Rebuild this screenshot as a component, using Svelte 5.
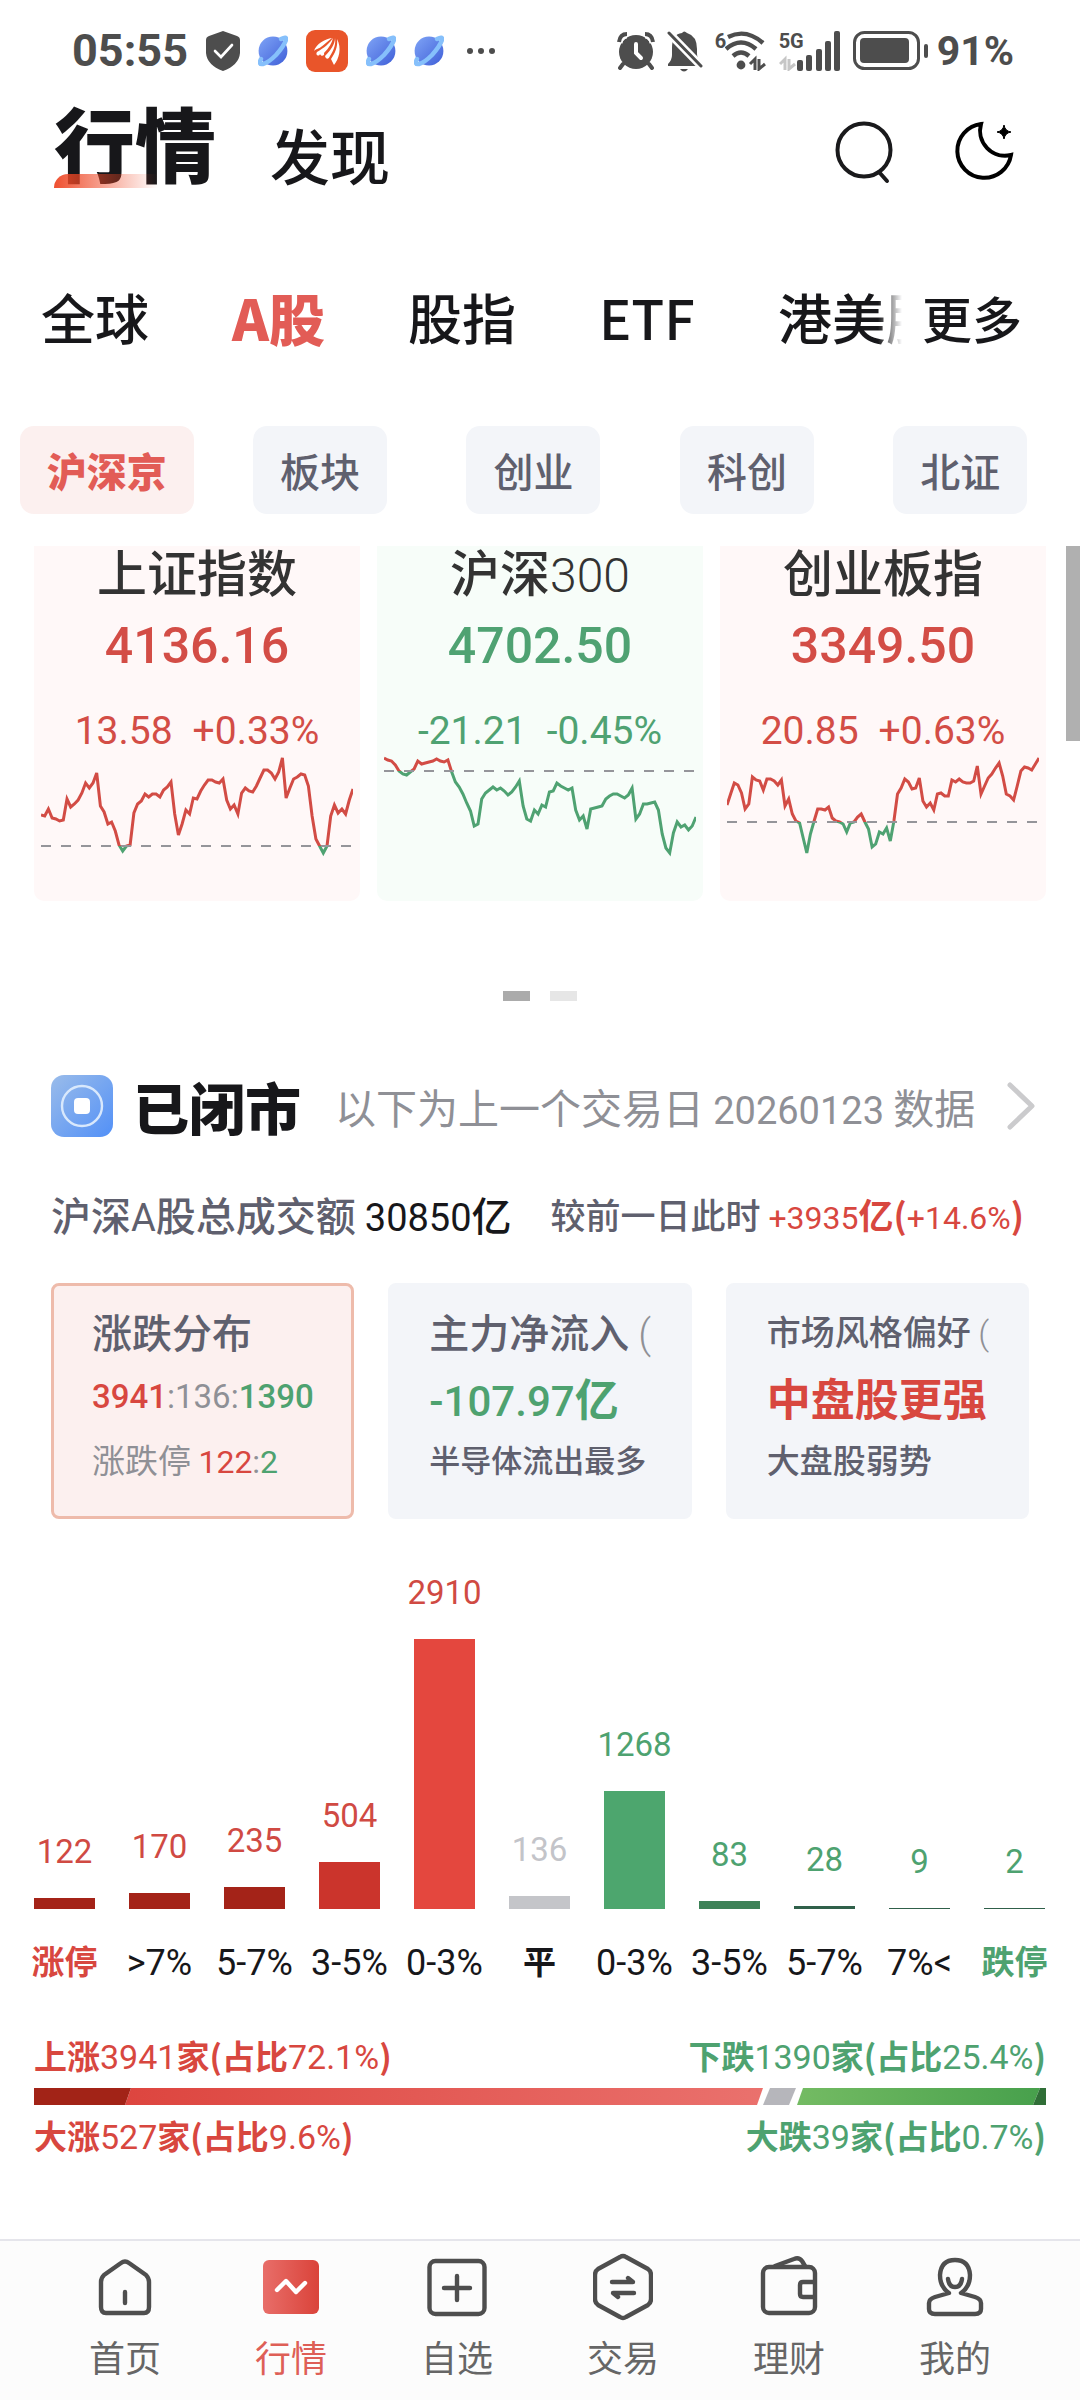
<script>
  const topTabs = ['全球', 'A股', '股指', 'ETF', '港美股'];
  const chips = ['沪深京', '板块', '创业', '科创', '北证'];

  let activeTab = $state('A股');
  let activeChip = $state('沪深京');

  const indexes = [
    {
      id: 'sh', name: '上证指数', code: '', value: '4136.16', diff: '13.58', pct: '+0.33%', up: true, base: 95,
      line: [64,65,58,67,68,70,69,48,56,53,49,42,32,37,32,22,55,61,73,71,80,94,100,95,94,62,53,50,43,46,43,43,46,39,36,31,63,84,73,59,63,47,48,40,34,29,29,31,32,28,49,58,54,63,42,37,40,41,35,27,19,19,22,28,21,7,47,37,28,26,23,24,35,65,88,95,102,95,65,54,62,58,63,49,38]
    },
    {
      id: 'hs', name: '沪深', code: '300', value: '4702.50', diff: '-21.21', pct: '-0.45%', up: false, base: 20,
      line: [7,9,10,14,20,23,24,21,18,10,13,12,11,10,8,10,11,9,21,31,36,43,52,60,75,73,48,42,39,36,39,37,40,44,41,36,30,55,68,70,59,63,54,56,41,40,32,35,37,39,37,59,69,65,78,58,57,56,55,48,45,43,43,45,47,44,37,68,63,53,53,52,51,59,83,97,102,82,71,76,74,79,75,66]
    },
    {
      id: 'cy', name: '创业板指', code: '', value: '3349.50', diff: '20.85', pct: '+0.63%', up: true, base: 71,
      line: [54,43,32,34,42,58,53,26,29,30,39,28,28,30,34,29,55,48,63,70,72,87,102,83,70,58,58,59,56,67,70,71,73,81,72,71,66,63,71,78,96,93,81,83,77,90,70,43,37,28,31,38,37,27,50,56,52,59,43,42,45,45,29,31,28,31,32,32,30,15,43,35,27,23,17,12,25,43,45,49,35,20,16,17,19,13,7]
    }
  ];

  const bars = [
    { count: 122, label: '涨停', tone: 'deep-red' },
    { count: 170, label: '>7%', tone: 'deep-red' },
    { count: 235, label: '5-7%', tone: 'deep-red' },
    { count: 504, label: '3-5%', tone: 'mid-red' },
    { count: 2910, label: '0-3%', tone: 'red' },
    { count: 136, label: '平', tone: 'grey' },
    { count: 1268, label: '0-3%', tone: 'green' },
    { count: 83, label: '3-5%', tone: 'mid-green' },
    { count: 28, label: '5-7%', tone: 'deep-green' },
    { count: 9, label: '7%<', tone: 'deep-green' },
    { count: 2, label: '跌停', tone: 'deep-green' }
  ];

  const navItems = [
    { id: 'home', label: '首页' },
    { id: 'market', label: '行情' },
    { id: 'watch', label: '自选' },
    { id: 'trade', label: '交易' },
    { id: 'wealth', label: '理财' },
    { id: 'mine', label: '我的' }
  ];

  function toPoints(line) {
    const step = 312 / (line.length - 1);
    return line.map((y, i) => `${(i * step).toFixed(1)},${y}`).join(' ');
  }

  function barHeight(count) {
    return Math.max(1, Math.round((count / 2910) * 270));
  }
</script>

{#snippet planet()}
  <svg width="30" height="32" viewBox="0 0 30 32">
    <circle cx="15" cy="16" r="14.4" fill="url(#planetFill)" />
    <path d="M3 24Q0 30 5 29Q10 28 18 20Q26 11 28 5Q29 1 23 4" fill="none" stroke="#86c0fb" stroke-width="4.4" stroke-linecap="round" />
  </svg>
{/snippet}

<div class="page">
  <svg class="defs" width="0" height="0" aria-hidden="true">
    <linearGradient id="planetFill" x1="0" y1="0" x2="1" y2="1">
      <stop offset="0" stop-color="#7fa4f6" />
      <stop offset="1" stop-color="#3f5fd8" />
    </linearGradient>
  </svg>

  <div class="status">
    <div class="status-left">
      <span class="clock">05:55</span>
      <svg width="34" height="40" viewBox="0 0 34 40">
        <path d="M17 0L31 5Q34 6 34 9V22Q33 34 17 40Q1 34 0 22V9Q0 6 3 5Z" fill="#4d4d4d" />
        <path d="M9 20L15 26L26 14" fill="none" stroke="#fff" stroke-width="2.6" stroke-linecap="round" />
      </svg>
      {@render planet()}
      <svg width="42" height="42" viewBox="0 0 42 42">
        <rect width="42" height="42" rx="9" fill="#e9552a" />
        <path d="M26 8C19 9 10 14 8 21C11 18 13 19 15 17C19 14 22 11 26 8Z" fill="#fff" />
        <path d="M27 8C24 13 18 18 11 22C9 25 13 27 14 24C15 27 19 26 18 23C23 18 26 13 27 8Z" fill="#fff" />
        <path d="M29 8C29 14 25 20 19 26C20 30 23 29 24 26C28 20 30 14 29 8Z" fill="#fff" />
        <path d="M31 9C32 17 29 23 25 29L28 35C33 29 36 18 31 9Z" fill="#fff" />
      </svg>
      {@render planet()}
      {@render planet()}
      <svg class="more-dots" width="30" height="8" viewBox="0 0 30 8" fill="#4d4d4d">
        <circle cx="4" cy="4" r="3" /><circle cx="15" cy="4" r="3" /><circle cx="26" cy="4" r="3" />
      </svg>
    </div>
    <div class="status-right">
      <svg width="38" height="38" viewBox="0 0 38 38">
        <circle cx="19" cy="20" r="17" fill="#4d4d4d" />
        <path d="M6 32L3 36M32 32L35 36" stroke="#4d4d4d" stroke-width="4" stroke-linecap="round" />
        <path d="M2 11Q3 3 10 3M28 3Q35 3 36 11" fill="none" stroke="#fff" stroke-width="7" />
        <path d="M2 10Q3 2 10 2M28 2Q35 2 36 10" fill="none" stroke="#4d4d4d" stroke-width="4" />
        <path d="M19 12V21L24 26" fill="none" stroke="#fff" stroke-width="4" stroke-linecap="round" />
      </svg>
      <svg width="36" height="42" viewBox="0 0 36 42">
        <path d="M5 18Q5 4 15 3Q17 0 20 3Q30 6 30 19V24Q30 28 34 34V36H1V34Q5 30 5 25Z" fill="#4d4d4d" />
        <path d="M13 39H21Q17 44 13 39Z" fill="#4d4d4d" />
        <path d="M0 1L36 38" stroke="#fff" stroke-width="8" />
        <path d="M2 3L34 36" stroke="#4d4d4d" stroke-width="3" stroke-linecap="round" />
      </svg>
      <div class="wifi">
        <span class="tiny">6</span>
        <svg width="42" height="40" viewBox="0 0 42 40">
          <g fill="none" stroke="#4d4d4d" stroke-width="4.4">
            <path d="M3 6Q21 -3 38 12" /><path d="M1 18Q16 5 31 18" /><path d="M8 25Q16 18 24 25" />
          </g>
          <circle cx="16" cy="34" r="4.4" fill="#4d4d4d" />
          <path d="M25 33L30 28V39M34 28V38L40 33" fill="none" stroke="#4d4d4d" stroke-width="3" />
        </svg>
      </div>
      <div class="signal">
        <span class="tiny">5G</span>
        <svg width="62" height="40" viewBox="0 0 62 40">
          <path d="M1 33L6 28V39M10 28V38L16 33" fill="none" stroke="#c6c6c6" stroke-width="3" />
          <g fill="#4d4d4d">
            <rect x="18" y="29" width="6" height="11" rx="2" /><rect x="27" y="24" width="6" height="16" rx="2" />
            <rect x="37" y="18" width="6" height="22" rx="2" /><rect x="46" y="10" width="6" height="30" rx="2" />
            <rect x="55" y="0" width="6" height="40" rx="2" />
          </g>
        </svg>
      </div>
      <div class="battery">
        <svg width="76" height="40" viewBox="0 0 76 40">
          <rect x="1.5" y="1.5" width="64" height="36" rx="10" fill="none" stroke="#4d4d4d" stroke-width="3" />
          <rect x="7" y="7" width="49" height="25" rx="4" fill="#4d4d4d" />
          <rect x="71" y="13" width="4" height="14" rx="2" fill="#4d4d4d" />
        </svg>
        <span class="clock level">91%</span>
      </div>
    </div>
  </div>

  <header class="header">
    <h1>行情</h1>
    <a class="discover" href="#discover">发现</a>
    <div class="header-actions">
      <button type="button" aria-label="搜索">
        <svg width="60" height="64" viewBox="0 0 60 64" fill="none" stroke="#1a1a1c" stroke-width="4">
          <circle cx="30" cy="30" r="26.5" />
          <path d="M45 52L53 61" stroke-linecap="round" />
        </svg>
      </button>
      <button type="button" aria-label="夜间模式">
        <svg width="60" height="64" viewBox="0 0 60 64">
          <path d="M26 4A27 27 0 1 0 56 35A25 25 0 0 1 26 4Z" fill="none" stroke="#000" stroke-width="4" />
          <path d="M49 5Q50 11 56 12Q50 13 49 19Q48 13 42 12Q48 11 49 5Z" fill="#000" stroke="#000" />
        </svg>
      </button>
    </div>
  </header>

  <nav class="tabs">
    <div class="tab-scroll">
      {#each topTabs as tab}
        <button type="button" class:active={tab === activeTab} onclick={() => (activeTab = tab)}>{tab}</button>
      {/each}
    </div>
    <button type="button" class="more">更多</button>
  </nav>

  <div class="chips">
    {#each chips as chip}
      <button type="button" class:active={chip === activeChip} onclick={() => (activeChip = chip)}>{chip}</button>
    {/each}
  </div>

  <main>
    <div class="scroll-thumb"></div>

    <section class="indexes">
      {#each indexes as item}
        <article class={item.up ? 'index up' : 'index down'}>
          <h2>{item.name}{#if item.code}<span class="fig">{item.code}</span>{/if}</h2>
          <div class="value num">{item.value}</div>
          <div class="change num"><span>{item.diff}</span><span>{item.pct}</span></div>
          <svg viewBox="0 0 312 110">
            <linearGradient id="line-{item.id}" gradientUnits="userSpaceOnUse" x1="0" y1="0" x2="0" y2="110">
              <stop offset={item.base / 110} stop-color="#d24c45" />
              <stop offset={item.base / 110} stop-color="#4fa272" />
            </linearGradient>
            <polyline points={toPoints(item.line)} fill="none" stroke="url(#line-{item.id})" stroke-width="3" />
            <line x1="0" x2="312" y1={item.base} y2={item.base} stroke="#95959a" stroke-width="2" stroke-dasharray="10 10" />
          </svg>
        </article>
      {/each}
    </section>

    <div class="dots"><i class="on"></i><i></i></div>

    <section class="closed">
      <svg class="closed-icon" width="62" height="62" viewBox="0 0 62 62">
        <linearGradient id="closedFill" x1="0" y1="0" x2="1" y2="1">
          <stop offset="0" stop-color="#9abcea" />
          <stop offset="1" stop-color="#5290f7" />
        </linearGradient>
        <rect width="62" height="62" rx="13" fill="url(#closedFill)" />
        <circle cx="31" cy="31" r="20" fill="none" stroke="#d8e8fc" stroke-width="2.4" />
        <rect x="23" y="23" width="16" height="16" rx="4" fill="#fff" />
      </svg>
      <h2>已闭市</h2>
      <p>以下为上一个交易日 <span class="fig">20260123</span> 数据</p>
      <svg class="chevron" width="30" height="48" viewBox="0 0 30 48" fill="none" stroke="#cbcbcd" stroke-width="5" stroke-linecap="round" stroke-linejoin="round">
        <path d="M4 3L26 24L4 45" />
      </svg>
    </section>

    <div class="turnover">
      <div class="total">沪深<span class="fig">A</span>股总成交额 <b><span class="fig">30850</span>亿</b></div>
      <div class="compare">较前一日此时 <b><span class="fig">+3935</span>亿(<span class="fig">+14.6%</span>)</b></div>
    </div>

    <section class="cards">
      <button type="button" class="card selected">
        <span class="title">涨跌分布</span>
        <span class="ratio num"><b class="r">3941</b>:136:<b class="g">1390</b></span>
        <span class="note pale">涨跌停 <span class="fig"><span class="r">122</span>:<span class="g">2</span></span></span>
      </button>
      <button type="button" class="card">
        <span class="title clipped">主力净流入 <span class="pale fig">(</span></span>
        <span class="strong g"><span class="fig">-107.97</span>亿</span>
        <span class="note small">半导体流出最多</span>
      </button>
      <button type="button" class="card">
        <span class="title clipped compact">市场风格偏好 <span class="pale fig">(</span></span>
        <span class="strong r">中盘股更强</span>
        <span class="note">大盘股弱势</span>
      </button>
    </section>

    <section class="chart">
      {#each bars as bar}
        <div class="col {bar.tone}">
          <span class="count num">{bar.count}</span>
          <div class="bar" style="height: {barHeight(bar.count)}px"></div>
        </div>
      {/each}
    </section>
    <div class="axis num">
      {#each bars as bar, i}
        <span class:r={i === 0} class:g={i === bars.length - 1} class:cjk={i % 5 === 0}>{bar.label}</span>
      {/each}
    </div>

    <section class="summary">
      <div class="pair">
        <span class="r">上涨<span class="fig">3941</span>家(占比<span class="fig">72.1%</span>)</span>
        <span class="g">下跌<span class="fig">1390</span>家(占比<span class="fig">25.4%</span>)</span>
      </div>
      <svg viewBox="0 0 1012 17" preserveAspectRatio="none">
        <linearGradient id="upFill">
          <stop offset="0" stop-color="#dd453f" />
          <stop offset="1" stop-color="#ea716d" />
        </linearGradient>
        <linearGradient id="downFill">
          <stop offset="0" stop-color="#74bb63" />
          <stop offset="1" stop-color="#47a04c" />
        </linearGradient>
        <path d="M97 0H729L723 17H91Z" fill="url(#upFill)" />
        <path d="M0 0H97L91 17H0Z" fill="#a22317" />
        <path d="M736 0H762L755 17H729Z" fill="#b6b6bb" />
        <path d="M769 0H1006L999 17H763Z" fill="url(#downFill)" />
        <path d="M1006 0H1012V17H999Z" fill="#306e37" />
      </svg>
      <div class="pair">
        <span class="r">大涨<span class="fig">527</span>家(占比<span class="fig">9.6%</span>)</span>
        <span class="g">大跌<span class="fig">39</span>家(占比<span class="fig">0.7%</span>)</span>
      </div>
    </section>
  </main>

  <nav class="tabbar">
    {#each navItems as item}
      <a href="#{item.id}" class:active={item.id === 'market'}>
        <svg width="60" height="68" viewBox="0 0 60 68" fill="none" stroke="#4e4e4e" stroke-width="4.4" stroke-linecap="round" stroke-linejoin="round">
          {#if item.id === 'home'}
            <path d="M6 29Q6 25 9 22L26 10Q30 7 34 10L51 22Q54 25 54 29V54Q54 60 49 60H11Q6 60 6 54Z" />
            <path d="M30 39V50" />
          {:else if item.id === 'market'}
            <linearGradient id="marketFill">
              <stop offset="0" stop-color="#e86e69" />
              <stop offset="1" stop-color="#da433a" />
            </linearGradient>
            <rect x="2" y="7" width="56" height="54" rx="6" fill="url(#marketFill)" stroke="none" />
            <path d="M16 37L25 28L35 39L44 30" stroke="#fff" />
          {:else if item.id === 'watch'}
            <rect x="2.5" y="8" width="55" height="53" rx="6" />
            <path d="M30 23V47M17 35H43" />
          {:else if item.id === 'trade'}
            <path d="M27 4Q30 2 33 4L55 16Q58 18 58 22V46Q58 50 55 52L33 64Q30 66 27 64L5 52Q2 50 2 46V22Q2 18 5 16Z" />
            <path d="M19 29H40L35 25M41 40H20L25 44" />
          {:else if item.id === 'wealth'}
            <rect x="4" y="14" width="52" height="46" rx="6" />
            <path d="M16 13L35 6Q40 4 43 8L46 13" />
            <path d="M55 29H44Q41 29 41 32V41Q41 44 44 44H55" />
          {:else}
            <path d="M24 40Q15 34 15 22Q16 7 30 7Q44 7 45 22Q45 34 36 40L50 44Q56 46 56 50V56Q56 61 50 61H10Q4 61 4 56V50Q4 46 10 44Z" />
            <path d="M23 26Q24 34 30 34Q36 34 37 26" />
          {/if}
        </svg>
        <span>{item.label}</span>
      </a>
    {/each}
  </nav>
</div>

<style>
  :global(body) {
    margin: 0;
    background: #fff;
  }

  .page {
    min-height: 100vh;
    display: flex;
    flex-direction: column;
    background: #fff;
    font-family: "Noto Sans CJK SC", "Noto Sans", sans-serif;
    font-weight: 500;
    color: #17171a;
  }

  .defs {
    position: absolute;
  }

  svg {
    display: block;
    flex: none;
  }

  button {
    margin: 0;
    padding: 0;
    border: none;
    background: none;
    font: inherit;
    color: inherit;
    cursor: pointer;
    white-space: nowrap;
  }

  a {
    color: inherit;
    text-decoration: none;
  }

  h1, h2, p {
    margin: 0;
    white-space: nowrap;
  }

  .num,
  .fig {
    font-family: Roboto, "Noto Sans CJK SC", sans-serif;
    font-weight: 400;
  }

  /* figures set inside Chinese text must not stretch its line box */
  .fig {
    line-height: 0;
  }

  .r {
    color: #d8473f;
  }

  .g {
    color: #4ea270;
  }

  .pale {
    color: #8f9096;
  }

  .status {
    height: 90px;
    padding: 6px 66px 0 72px;
    display: flex;
    justify-content: space-between;
    align-items: center;
    color: #4d4d4d;
  }

  .status-left {
    display: flex;
    align-items: center;
    gap: 18px;
  }

  .more-dots {
    margin-left: 4px;
  }

  .status-right {
    display: flex;
    align-items: center;
    gap: 12px;
  }

  .battery {
    display: flex;
    align-items: center;
    gap: 8px;
  }

  .clock {
    font: bold 45px/48px Roboto, sans-serif;
  }

  .clock.level {
    font-size: 41px;
  }

  .wifi,
  .signal {
    position: relative;
  }

  .wifi {
    padding-left: 10px;
  }

  .tiny {
    position: absolute;
    left: 0;
    top: -2px;
    font: bold 20px/24px Roboto, sans-serif;
  }

  .header {
    height: 88px;
    padding: 0 65px 0 54px;
    display: flex;
    align-items: flex-end;
  }

  h1 {
    position: relative;
    font-size: 81px;
    line-height: 86px;
    font-weight: 900;
  }

  h1::after {
    content: "";
    position: absolute;
    left: 0;
    bottom: -4px;
    width: 104px;
    height: 14px;
    border-radius: 14px 0 0 0;
    background: linear-gradient(90deg, rgba(238, 70, 36, 0.95), rgba(238, 70, 36, 0));
  }

  .discover {
    margin-left: 54px;
    font-size: 60px;
    line-height: 60px;
  }

  .header-actions {
    margin-left: auto;
    display: flex;
    gap: 61px;
  }

  .tabs {
    margin: 103px 58px 0 41px;
    display: flex;
    justify-content: space-between;
    font-size: 54px;
    line-height: 60px;
  }

  .tab-scroll {
    flex: 1;
    min-width: 0;
    margin: -12px 0;
    padding: 12px 0;
    overflow-x: clip;
    display: flex;
    gap: 83px;
    mask-image: linear-gradient(90deg, #000 calc(100% - 24px), transparent);
  }

  .tabs .active {
    font-size: 56px;
    color: #e25c56;
    font-weight: 900;
  }

  .tabs .more {
    margin-left: 20px;
    font-size: 50px;
  }

  .chips {
    margin: 79px 13px 0 0;
    display: grid;
    grid-template-columns: repeat(5, 1fr);
    justify-items: center;
  }

  .chips button {
    height: 88px;
    padding: 0 27px;
    border-radius: 14px;
    background: #f3f5f9;
    font-size: 40px;
    color: #5f606e;
  }

  .chips .active {
    background: #fcf0ef;
    color: #e25c56;
    font-weight: 900;
  }

  main {
    position: relative;
    flex: 1;
    margin-top: 32px;
  }

  .scroll-thumb {
    position: absolute;
    top: 0;
    right: 0;
    width: 14px;
    height: 195px;
    background: #b0b0b0;
  }

  .indexes {
    padding: 0 34px;
    display: grid;
    grid-template-columns: repeat(3, 1fr);
    gap: 17px;
  }

  .index {
    padding: 0 7px 40px;
    border-radius: 0 0 10px 10px;
    text-align: center;
    color: #d34d46;
  }

  .index.up {
    background: #fff8f8;
  }

  .index.down {
    background: #f7fdf9;
    color: #4fa272;
  }

  .index h2 {
    font-size: 50px;
    line-height: 48px;
    font-weight: 500;
    color: #333;
  }

  .index h2 .fig {
    font-size: 48px;
    font-weight: 300;
  }

  .value {
    margin-top: 26px;
    font-size: 50px;
    line-height: 52px;
    font-weight: 500;
  }

  .change {
    margin-top: 39px;
    display: flex;
    justify-content: center;
    gap: 20px;
    font-size: 39px;
    line-height: 40px;
  }

  .index svg {
    width: 100%;
  }

  .dots {
    margin-top: 90px;
    display: flex;
    justify-content: center;
    gap: 20px;
  }

  .dots i {
    width: 27px;
    height: 10px;
    background: #e6e6e6;
  }

  .dots .on {
    background: #ababab;
  }

  .closed {
    margin-top: 74px;
    padding: 0 44px 0 51px;
    display: flex;
    align-items: center;
  }

  .closed h2 {
    margin-left: 20px;
    font-size: 56px;
    line-height: 62px;
    font-weight: 900;
  }

  .closed p {
    margin-left: 34px;
    font-size: 41px;
    line-height: 62px;
    font-weight: 400;
    color: #8f9096;
  }

  .closed .fig {
    font-size: 38px;
  }

  .chevron {
    margin-left: auto;
  }

  .turnover {
    margin-top: 53px;
    padding: 0 56px 0 51px;
    display: flex;
    justify-content: space-between;
    line-height: 48px;
    color: #5f606e;
    white-space: nowrap;
  }

  .total {
    font-size: 40px;
  }

  .total .fig {
    font-size: 38px;
  }

  .total b {
    font-weight: 500;
    color: #17171a;
  }

  .compare {
    font-size: 35px;
  }

  .compare .fig {
    font-size: 32px;
  }

  .compare b {
    font-weight: 700;
    color: #d8473f;
  }

  .cards {
    margin-top: 45px;
    padding: 0 51px;
    display: grid;
    grid-template-columns: repeat(3, minmax(0, 1fr));
    gap: 34px;
  }

  .card {
    padding: 21px 37px 37px 38px;
    border: 3px solid #f3f5f9;
    border-radius: 8px;
    background: #f3f5f9;
    display: flex;
    flex-direction: column;
    gap: 18px;
    text-align: left;
    color: #5f606e;
  }

  .card.selected {
    border-color: #eebbab;
    background: #fcf0ef;
  }

  .title {
    font-size: 40px;
    line-height: 48px;
  }

  .title.clipped {
    overflow-x: clip;
  }

  .title .fig {
    font-weight: 300;
  }

  .title.compact {
    font-size: 34px;
  }

  .ratio {
    font-size: 33px;
    line-height: 48px;
    color: #8f9096;
  }

  .ratio b {
    font-weight: 500;
  }

  .strong {
    font-size: 44px;
    line-height: 48px;
    font-weight: 700;
  }

  .strong .fig {
    font-size: 42px;
    font-weight: 500;
  }

  .note {
    font-size: 33px;
    line-height: 40px;
  }

  .note.small {
    font-size: 31px;
  }

  .note.pale {
    font-weight: 400;
  }

  .note .fig {
    font-size: 32px;
  }

  .chart {
    margin-top: 58px;
    padding: 0 18px 0 17px;
    display: flex;
    align-items: flex-end;
  }

  .col {
    flex: 1;
    display: flex;
    flex-direction: column;
    align-items: center;
    color: #4ea270;
  }

  .count {
    margin-bottom: 30px;
    font-size: 33px;
    line-height: 32px;
  }

  .bar {
    width: 61px;
  }

  .deep-red,
  .mid-red,
  .red {
    color: #d04a43;
  }

  .col.grey {
    color: #c3c4c9;
  }

  .deep-red .bar {
    background: #a42318;
  }

  .mid-red .bar {
    background: #cb342c;
  }

  .red .bar {
    background: #e4473e;
  }

  .grey .bar {
    background: #c4c5c9;
  }

  .green .bar {
    background: #4da66e;
  }

  .mid-green .bar {
    background: #3e8258;
  }

  .deep-green .bar {
    background: #30604a;
  }

  .axis {
    margin-top: 34px;
    padding: 0 18px 0 17px;
    display: flex;
    font-size: 36px;
    line-height: 40px;
    white-space: nowrap;
  }

  .axis span {
    flex: 1 1 0;
    min-width: 0;
    display: flex;
    justify-content: center;
  }

  .axis .cjk {
    font-size: 33px;
    font-weight: 700;
  }

  .summary {
    margin: 52px 34px 60px;
  }

  .summary svg {
    width: 100%;
    height: 17px;
    margin: 13px 0 10px;
  }

  .pair {
    display: flex;
    justify-content: space-between;
    font-size: 33px;
    line-height: 40px;
    font-weight: 700;
  }

  .pair .fig {
    font-size: 34px;
  }

  .tabbar {
    padding: 12px 42px 24px;
    border-top: 2px solid #e5e5eb;
    background: #fcfcfc;
    display: flex;
  }

  .tabbar a {
    flex: 1;
    display: flex;
    flex-direction: column;
    align-items: center;
    gap: 15px;
    font-size: 36px;
    line-height: 40px;
    font-weight: 400;
    color: #666;
  }

  .tabbar .active {
    color: #de5f57;
  }
</style>
